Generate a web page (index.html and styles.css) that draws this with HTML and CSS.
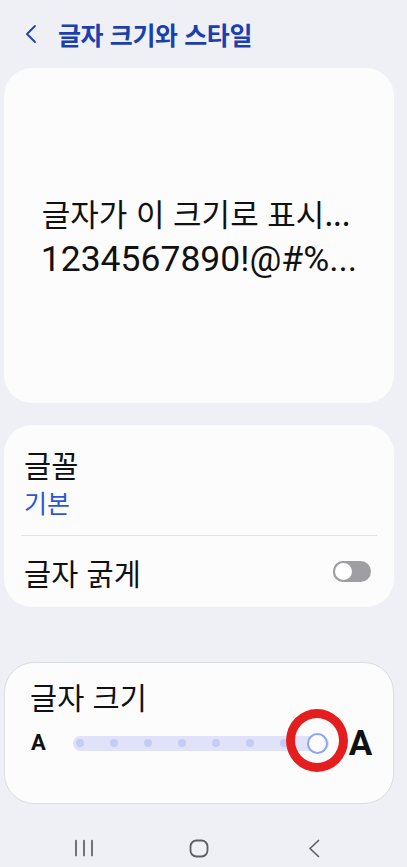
FILE: index.html
```html
<!DOCTYPE html>
<html lang="ko">
  <head>
    <meta charset="UTF-8" />
    <meta name="viewport" content="width=device-width, initial-scale=1.0" />
    <title>글자 크기와 스타일</title>
    <link rel="stylesheet" href="styles.css">
  </head>
  <body>
    <div class="screen">
      <!-- App Bar -->
      <header class="appbar">
        <svg class="back" width="14" height="20" viewBox="0 0 14 20">
          <path d="M11 2 L3 10 L11 18" fill="none" stroke="#1c3fae" stroke-width="1.8" stroke-linecap="round" stroke-linejoin="round" />
        </svg>
        <h1 class="title">글자 크기와 스타일</h1>
      </header>

      <main class="content">
        <!-- Preview -->
        <section class="card preview">
          <p class="preview-ko">글자가 이 크기로 표시...</p>
          <p class="preview-num">1234567890!@#%...</p>
        </section>

        <!-- Font options -->
        <section class="card options">
          <div class="font-option">
            <div class="option-title">글꼴</div>
            <div class="option-value">기본</div>
          </div>
          <div class="divider"></div>
          <div class="switch-option">
            <span class="option-title">글자 굵게</span>
            <span class="toggle"><span class="knob"></span></span>
          </div>
        </section>

        <!-- Font size -->
        <section class="card size-card">
          <div class="option-title">글자 크기</div>
          <div class="slider">
            <span class="a-small">A</span>
            <div class="track">
              <span class="dot"></span>
              <span class="dot"></span>
              <span class="dot"></span>
              <span class="dot"></span>
              <span class="dot"></span>
              <span class="dot"></span>
              <span class="dot"></span>
              <span class="thumb"><span class="mark"></span></span>
            </div>
            <span class="a-large">A</span>
          </div>
        </section>
      </main>

      <!-- Navigation Bar -->
      <nav class="navbar">
        <span class="nav-item">
          <svg width="20" height="18" viewBox="0 0 20 18">
            <path d="M2 1.5 V16.5 M10 1.5 V16.5 M18 1.5 V16.5" stroke="#5e5e62" stroke-width="1.7" stroke-linecap="round" />
          </svg>
        </span>
        <span class="nav-item">
          <svg width="20" height="19" viewBox="0 0 20 19">
            <rect x="1.5" y="1.5" width="17" height="16" rx="6" fill="none" stroke="#5e5e62" stroke-width="1.8" />
          </svg>
        </span>
        <span class="nav-item">
          <svg width="14" height="19" viewBox="0 0 14 19">
            <path d="M11.5 1.5 L3 9.5 L11.5 17.5" fill="none" stroke="#5e5e62" stroke-width="1.7" stroke-linecap="round" stroke-linejoin="round" />
          </svg>
        </span>
      </nav>
    </div>
  </body>
</html>
```

FILE: styles.css
```css
/* Basic Styles */
body {
  margin: 0;
  padding: 0;
  background-color: #eff0f5;
  font-family: "Noto Sans CJK KR", "Noto Sans", sans-serif;
  color: #111;
}

.screen {
  display: flex;
  flex-direction: column;
  min-height: 867px;
}

/* App Bar */
.appbar {
  height: 68px;
  display: flex;
  align-items: center;
  padding-left: 24px;
}

.back {
  margin-right: 20px;
}

.title {
  margin: 0;
  font-size: 25px;
  font-weight: 700;
  letter-spacing: -0.4px;
  color: #1c3fae;
}

/* Cards */
.content {
  padding: 0 13px 0 4px;
}

.card {
  background-color: #fcfcfd;
  border-radius: 28px;
}

.preview {
  height: 335px;
  display: flex;
  flex-direction: column;
  justify-content: center;
  align-items: center;
  margin-bottom: 22px;
}

.preview p {
  margin: 0;
  line-height: 46px;
  white-space: nowrap;
}

.preview-ko {
  font-size: 31px;
  padding-right: 6px;
}

.preview-num {
  font-family: Roboto, sans-serif;
  font-size: 35.5px;
}

.options {
  margin-bottom: 55px;
}

.option-title {
  font-size: 29.5px;
  line-height: 34px;
}

.font-option {
  padding: 22px 20px 16px;
}

.option-value {
  margin-top: 4px;
  font-size: 25px;
  line-height: 34px;
  color: #2d55d8;
}

.divider {
  height: 1px;
  margin: 0 17px;
  background-color: #e2e2e6;
}

.switch-option {
  height: 71px;
  display: flex;
  align-items: center;
  justify-content: space-between;
  padding: 0 23px 0 20px;
}

.toggle {
  width: 38px;
  height: 21px;
  border-radius: 11px;
  background-color: #9e9ea3;
  display: flex;
  align-items: center;
}

.knob {
  width: 21px;
  height: 21px;
  box-sizing: border-box;
  border-radius: 50%;
  border: 2px solid #9e9ea3;
  background-color: #fff;
}

/* Font size slider */
.size-card {
  border: 1px solid #dcdce1;
  border-radius: 30px;
  padding: 16px 0 30px 25px;
}

.slider {
  height: 60px;
  display: flex;
  align-items: center;
  padding-left: 1px;
}

.a-small,
.a-large {
  font-family: Roboto, sans-serif;
  font-weight: 700;
  line-height: 1;
}

.a-small {
  font-size: 22px;
  margin-right: 27px;
}

.a-large {
  font-size: 35px;
  margin-left: 20px;
}

.track {
  flex: 0 0 256px;
  height: 15px;
  box-sizing: border-box;
  border-radius: 8px;
  background-color: #dfe2f8;
  display: flex;
  align-items: center;
  gap: 26px;
  padding-left: 3px;
}

.dot {
  width: 8px;
  height: 8px;
  border-radius: 50%;
  background-color: #c5ccf3;
}

.thumb {
  position: relative;
  width: 21px;
  height: 21px;
  box-sizing: border-box;
  margin-left: -7px;
  border: 2px solid #8ea4ee;
  border-radius: 50%;
  background-color: #fcfcfd;
}

/* red highlight ring drawn over the thumb */
.mark {
  position: absolute;
  left: 50%;
  top: 50%;
  width: 62px;
  height: 63px;
  box-sizing: border-box;
  transform: translate(-50%, -54%);
  border: 9px solid #e41d1f;
  border-radius: 50%;
}

/* Navigation Bar */
.navbar {
  margin-top: auto;
  height: 38px;
  display: flex;
  align-items: center;
  gap: 75px;
  padding-left: 64px;
}

.nav-item {
  width: 40px;
  display: flex;
  justify-content: center;
}
```
